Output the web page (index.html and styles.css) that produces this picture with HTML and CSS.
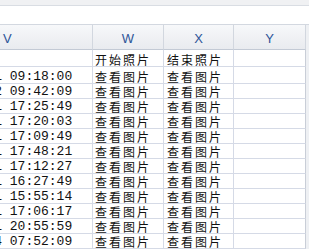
FILE: index.html
```html
<!DOCTYPE html>
<html lang="zh-CN">
<head>
<meta charset="utf-8">
<link rel="stylesheet" href="styles.css">
</head>
<body>
<div class="top-band"></div>
<div class="formula-bar"></div>
<div class="sheet">
  <div class="grid">
    <div class="hd hd-v">V</div>
    <div class="hd">W</div>
    <div class="hd">X</div>
    <div class="hd">Y</div>

    <div class="c c-v tall"></div>
    <div class="c c-w tall">开始照片</div>
    <div class="c c-x tall">结束照片</div>
    <div class="c c-y tall"></div>

    <div class="c c-v tall"><span class="dt">2019-05-01 09:18:00</span></div>
    <div class="c c-w tall">查看图片</div>
    <div class="c c-x tall">查看图片</div>
    <div class="c c-y tall"></div>

    <div class="c c-v"><span class="dt">2019-05-02 09:42:09</span></div>
    <div class="c c-w">查看图片</div>
    <div class="c c-x">查看图片</div>
    <div class="c c-y"></div>

    <div class="c c-v"><span class="dt">2019-05-11 17:25:49</span></div>
    <div class="c c-w">查看图片</div>
    <div class="c c-x">查看图片</div>
    <div class="c c-y"></div>

    <div class="c c-v"><span class="dt">2019-05-21 17:20:03</span></div>
    <div class="c c-w">查看图片</div>
    <div class="c c-x">查看图片</div>
    <div class="c c-y"></div>

    <div class="c c-v"><span class="dt">2019-05-31 17:09:49</span></div>
    <div class="c c-w">查看图片</div>
    <div class="c c-x">查看图片</div>
    <div class="c c-y"></div>

    <div class="c c-v"><span class="dt">2019-06-11 17:48:21</span></div>
    <div class="c c-w">查看图片</div>
    <div class="c c-x">查看图片</div>
    <div class="c c-y"></div>

    <div class="c c-v"><span class="dt">2019-06-21 17:12:27</span></div>
    <div class="c c-w">查看图片</div>
    <div class="c c-x">查看图片</div>
    <div class="c c-y"></div>

    <div class="c c-v"><span class="dt">2019-07-01 16:27:49</span></div>
    <div class="c c-w">查看图片</div>
    <div class="c c-x">查看图片</div>
    <div class="c c-y"></div>

    <div class="c c-v"><span class="dt">2019-07-11 15:55:14</span></div>
    <div class="c c-w">查看图片</div>
    <div class="c c-x">查看图片</div>
    <div class="c c-y"></div>

    <div class="c c-v"><span class="dt">2019-07-21 17:06:17</span></div>
    <div class="c c-w">查看图片</div>
    <div class="c c-x">查看图片</div>
    <div class="c c-y"></div>

    <div class="c c-v"><span class="dt">2019-07-31 20:55:59</span></div>
    <div class="c c-w">查看图片</div>
    <div class="c c-x">查看图片</div>
    <div class="c c-y"></div>

    <div class="c c-v"><span class="dt">2019-08-04 07:52:09</span></div>
    <div class="c c-w">查看图片</div>
    <div class="c c-x">查看图片</div>
    <div class="c c-y"></div>
  </div>
  <div class="edge"></div>
</div>
</body>
</html>
```
FILE: styles.css
```css
html, body {
  margin: 0;
  padding: 0;
  background: #ffffff;
  overflow: hidden;
}
body {
  width: 309px;
  height: 249px;
}
.top-band {
  height: 5px;
  background: #f0f1f3;
  border-bottom: 1px solid #d9dde3;
}
.formula-bar {
  height: 18px;
  background: #ffffff;
  border-bottom: 1px solid #d3d8e0;
}
.sheet {
  display: flex;
  align-items: flex-start;
}
.grid {
  display: grid;
  grid-template-columns: 93px 71px 70px 72px;
  grid-template-rows: 25px 17px 17px repeat(11, 15px);
}
.edge {
  flex: 1;
  align-self: stretch;
  background: #eef0f3;
}
.hd {
  background: linear-gradient(#f7f8fa, #e9ebef);
  border-right: 1px solid #d2d7df;
  border-bottom: 1px solid #c3cad5;
  box-sizing: border-box;
  display: flex;
  align-items: flex-end;
  justify-content: center;
  padding-bottom: 4px;
  font-family: "Liberation Sans", Arial, sans-serif;
  font-size: 13px;
  line-height: 12px;
  color: #2e5598;
}
.hd-v {
  justify-content: flex-start;
  padding-left: 3px;
}
.c {
  box-sizing: border-box;
  border-right: 1px solid #d5dae6;
  border-bottom: 1px solid #d5dae6;
  display: flex;
  align-items: flex-end;
  overflow: hidden;
  white-space: nowrap;
  color: #111111;
  font-family: "Noto Sans CJK SC", sans-serif;
  font-size: 12px;
  line-height: 13px;
  letter-spacing: 2px;
}
.c-w {
  padding-left: 2px;
}
.c-x {
  padding-left: 3px;
}
.c-y {
  border-right-color: #c9ced7;
}
.dt {
  font-family: "Liberation Mono", "Courier New", monospace;
  font-size: 13px;
  letter-spacing: 0;
  line-height: 13px;
  margin-left: -76px;
}
```
